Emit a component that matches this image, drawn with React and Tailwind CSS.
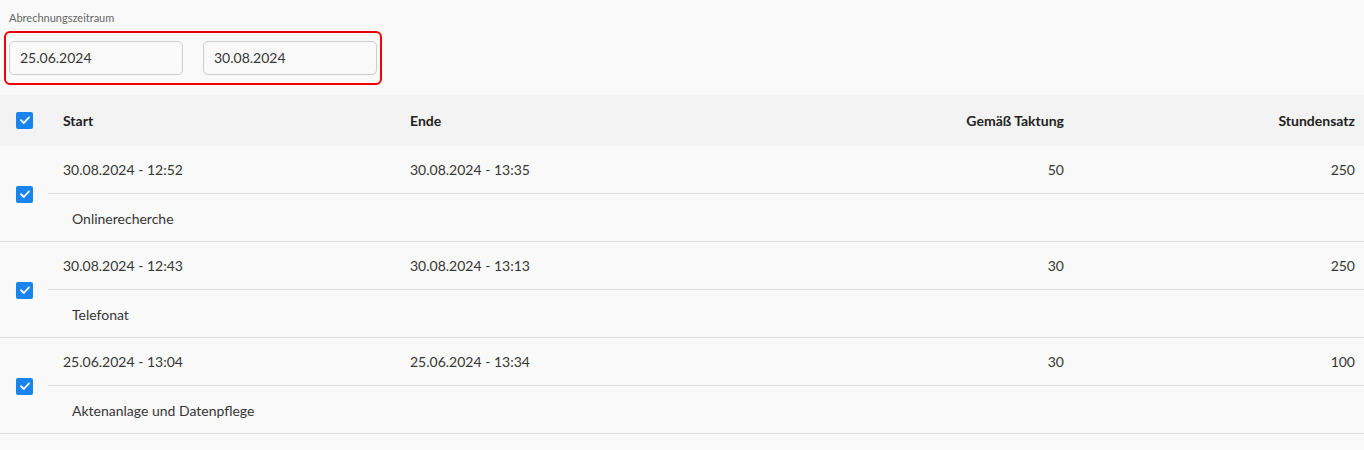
const rows = [
  { start: '30.08.2024 - 12:52', ende: '30.08.2024 - 13:35', takt: '50', satz: '250', text: 'Onlinerecherche' },
  { start: '30.08.2024 - 12:43', ende: '30.08.2024 - 13:13', takt: '30', satz: '250', text: 'Telefonat' },
  { start: '25.06.2024 - 13:04', ende: '25.06.2024 - 13:34', takt: '30', satz: '100', text: 'Aktenanlage und Datenpflege' },
]

function Check() {
  return (
    <span className="flex h-[17px] w-[17px] items-center justify-center rounded-[2px] bg-[#1a84ee]">
      <svg width="12" height="12" viewBox="0 0 12 12" fill="none">
        <path d="M2 6.2 4.8 9 10 3.4" stroke="white" strokeWidth="1.8" strokeLinecap="round" strokeLinejoin="round" />
      </svg>
    </span>
  )
}

const grid = 'grid grid-cols-[347px_347px_337px_1fr]'

export default function App() {
  return (
    <div className="min-h-[450px] bg-[#f9f9f9] text-[14px] text-[#363636] [font-family:Lato,'Noto_Sans',sans-serif]">
      <div className="px-[9px] pt-[10px] text-[11px] text-[#666]">Abrechnungszeitraum</div>
      <div className="ml-[4px] mt-[4px] flex w-[378px] gap-[20px] rounded-[6px] border-2 border-[#ee0000] px-[3px] py-[8px]">
        <div className="flex h-[34px] w-[174px] items-center rounded-[5px] border border-[#cdcdcd] px-[10px]">25.06.2024</div>
        <div className="flex h-[34px] w-[174px] items-center rounded-[5px] border border-[#cdcdcd] px-[10px]">30.08.2024</div>
      </div>

      <div className="mt-[10px]">
        <div className="flex h-[51px] items-center bg-[#f3f3f3] font-bold text-[#222]">
          <div className="flex w-[48px] justify-center pl-[3px] pr-[2px]"><Check /></div>
          <div className={`${grid} flex-1`}>
            <div className="pl-[15px]">Start</div>
            <div className="pl-[15px]">Ende</div>
            <div className="pr-[15px] text-right">Gemäß Taktung</div>
            <div className="pr-[9px] text-right">Stundensatz</div>
          </div>
        </div>

        {rows.map((r) => (
          <div key={r.start} className="flex border-b border-[#dedede]">
            <div className="flex w-[48px] items-center justify-center pl-[3px] pr-[2px] pt-[2px]"><Check /></div>
            <div className="flex-1">
              <div className={`${grid} h-[48px] items-center border-b border-[#dedede]`}>
                <div className="pl-[15px]">{r.start}</div>
                <div className="pl-[15px]">{r.ende}</div>
                <div className="pr-[15px] text-right">{r.takt}</div>
                <div className="pr-[9px] text-right">{r.satz}</div>
              </div>
              <div className="flex h-[47px] items-center pl-[24px] pt-[2px]">{r.text}</div>
            </div>
          </div>
        ))}
      </div>
    </div>
  )
}
